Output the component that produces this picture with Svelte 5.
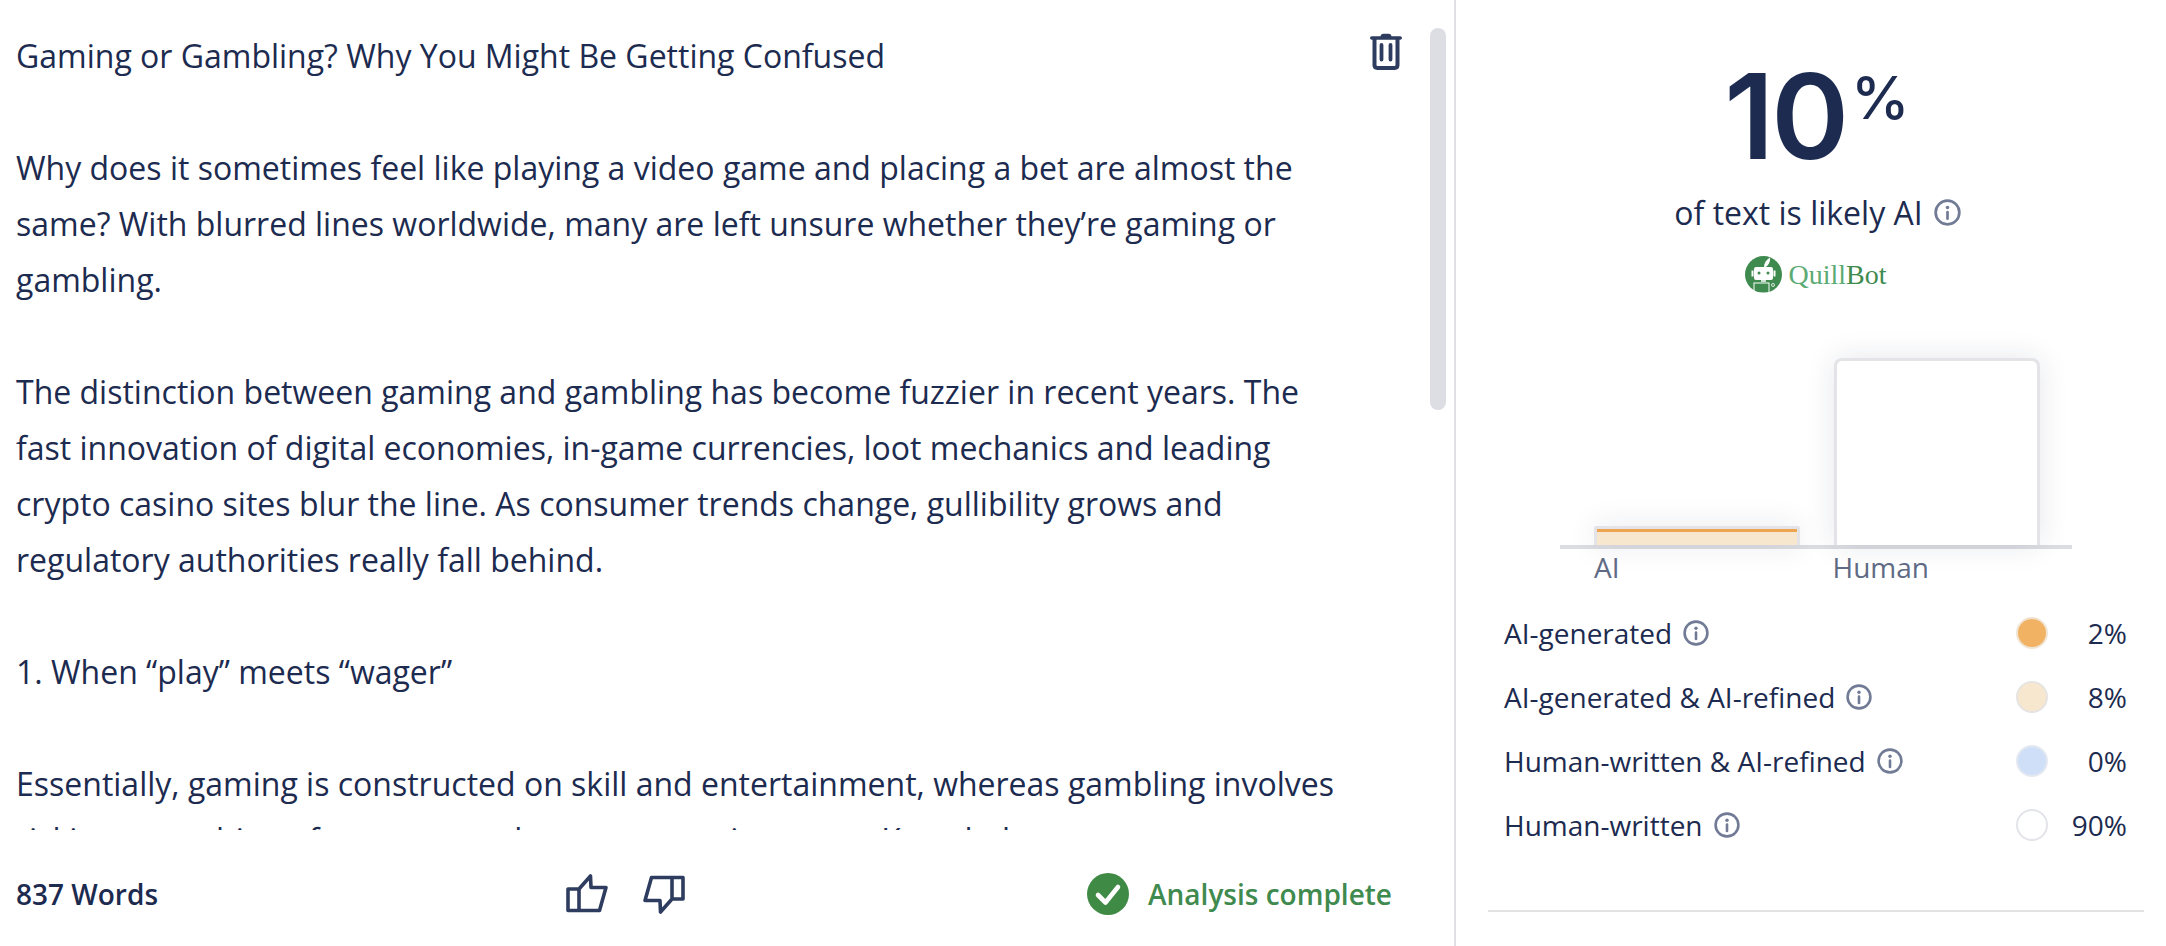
<script lang="ts">
	const paragraphs = [
		'Gaming or Gambling? Why You Might Be Getting Confused',
		'Why does it sometimes feel like playing a video game and placing a bet are almost the same? With blurred lines worldwide, many are left unsure whether they’re gaming or gambling.',
		'The distinction between gaming and gambling has become fuzzier in recent years. The fast innovation of digital economies, in-game currencies, loot mechanics and leading crypto casino sites blur the line. As consumer trends change, gullibility grows and regulatory authorities really fall behind.',
		'1. When “play” meets “wager”',
		'Essentially, gaming is constructed on skill and entertainment, whereas gambling involves risking something of monetary value on uncertain events. Knowledge'
	];

	const legend = [
		{ label: 'AI-generated', value: '2%', color: '#f2b264', ring: '#f0e4d4' },
		{ label: 'AI-generated & AI-refined', value: '8%', color: '#f8e7cf', ring: '#e6e4e2' },
		{ label: 'Human-written & AI-refined', value: '0%', color: '#cfdff8', ring: '#e4e8f0' },
		{ label: 'Human-written', value: '90%', color: '#ffffff', ring: '#e2e4ea' }
	];
</script>

{#snippet info(size: number)}
	<svg class="info" width={size} height={size} viewBox="0 0 26 26" aria-hidden="true">
		<circle cx="13" cy="13" r="11.4" fill="none" stroke="#717b95" stroke-width="2.6" />
		<circle cx="13" cy="8.2" r="1.7" fill="#717b95" />
		<path d="M13 12.500v6.500" stroke="#717b95" stroke-width="2.6" stroke-linecap="round" />
	</svg>
{/snippet}

<div class="page">
	<section class="editor">
		<div class="scroll">
			{#each paragraphs as text}
				<p>{text}</p>
			{/each}
		</div>

		<svg class="trash" width="32" height="37" viewBox="0 0 32 37" aria-label="Delete">
			<path d="M10.500 4c0-2.200 1.200-3.200 3-3.200h5c1.800 0 3 1 3 3.200z" fill="#2e3d5f" />
			<path d="M1.800 5h28.400" stroke="#2e3d5f" stroke-width="3.600" stroke-linecap="round" />
			<path d="M4.500 5v27c0 1.900 1 2.900 2.900 2.900h17.200c1.900 0 2.900-1 2.900-2.900V5" fill="none" stroke="#2e3d5f" stroke-width="4" />
			<path d="M11.500 12v14.500M20.500 12v14.500" stroke="#2e3d5f" stroke-width="3.800" stroke-linecap="round" />
		</svg>
		<div class="scrollbar"></div>

		<footer>
			<span class="count">837 Words</span>
			<div class="votes">
				<svg width="42" height="40" viewBox="0 0 42 40" aria-label="Thumbs up">
					<path d="M13 15H2v21.500h11M13 15 24.500 2l.5 11.500h15l-6.500 23H13z" fill="none" stroke="#2e3d5f" stroke-width="3.600" stroke-linejoin="round" />
				</svg>
				<svg width="42" height="40" viewBox="0 0 42 40" aria-label="Thumbs down">
					<path d="M29 25h11V3.500H29M29 25 17.500 38l-.5-11.500H2L8.500 3.500H29z" fill="none" stroke="#2e3d5f" stroke-width="3.600" stroke-linejoin="round" />
				</svg>
			</div>
			<div class="status">
				<svg width="42" height="42" viewBox="0 0 42 42" aria-hidden="true">
					<circle cx="21" cy="21" r="21" fill="#3f8a44" />
					<path d="M11 22l7.500 7.500L31 14" fill="none" stroke="#fff" stroke-width="4.600" stroke-linecap="round" stroke-linejoin="round" />
				</svg>
				<span>Analysis complete</span>
			</div>
		</footer>
	</section>

	<aside class="report">
		<div class="score"><span class="num">10</span><span class="pct">%</span></div>
		<div class="caption">of text is likely AI{@render info(27)}</div>
		<div class="brand">
			<svg width="37" height="37" viewBox="0 0 37 37" aria-hidden="true">
				<circle cx="18.500" cy="18.500" r="18.500" fill="#3f8a4e" />
				<path d="M19 11c0-4 2-7 6-9.500 0.500 3.500-1 7.500-4.500 9.500z" fill="#fff" />
				<rect x="9" y="11" width="19" height="13" rx="2" fill="#fff" />
				<rect x="6.500" y="14.500" width="2" height="6" fill="#fff" />
				<rect x="28.500" y="14.500" width="2" height="6" fill="#fff" />
				<circle cx="14" cy="17" r="1.500" fill="#3f8a4e" />
				<circle cx="23" cy="17" r="1.500" fill="#3f8a4e" />
				<rect x="16" y="24" width="5" height="2" fill="#cfe3d4" />
				<rect x="9" y="27" width="15" height="10" fill="none" stroke="#fff" stroke-width="1" />
				<circle cx="28" cy="29" r="1.500" fill="none" stroke="#fff" stroke-width="0.800" />
			</svg>
			<span class="wordmark"><span class="quill">Quill</span><span class="bot">Bot</span></span>
		</div>

		<div class="chart">
			<div class="bars">
				<div class="bar ai"><div class="strip"></div></div>
				<div class="bar human"></div>
			</div>
			<div class="axis">
				<span>AI</span>
				<span>Human</span>
			</div>
		</div>

		<ul class="legend">
			{#each legend as row}
				<li>
					<span class="label">{row.label}{@render info(26)}</span>
					<span class="dot" style="background: {row.color}; border-color: {row.ring}"></span>
					<span class="value">{row.value}</span>
				</li>
			{/each}
		</ul>

		<div class="rule"></div>
	</aside>
</div>

<style>
	:global(body) {
		margin: 0;
		background: #fff;
		color: #1c2b4f;
		font-family: 'Open Sans', 'Liberation Sans', sans-serif;
	}

	.page {
		display: flex;
		width: 2166px;
		height: 946px;
		overflow: hidden;
	}

	.editor {
		position: relative;
		display: flex;
		flex-direction: column;
		width: 1454px;
		flex: none;
		border-right: 2px solid #dfe0e4;
	}

	.scroll {
		height: 802px;
		padding: 28px 100px 0 16px;
		overflow: hidden;
		font-size: 32px;
		line-height: 56px;
	}

	.scroll p {
		margin: 0 0 56px;
	}

	.trash {
		position: absolute;
		top: 33px;
		left: 1370px;
	}

	.scrollbar {
		position: absolute;
		top: 28px;
		left: 1430px;
		width: 16px;
		height: 382px;
		border-radius: 8px;
		background: #dcdee3;
	}

	footer {
		flex: 1;
		display: grid;
		grid-template-columns: 550px 130px 1fr;
		align-items: center;
		padding: 12px 62px 0 16px;
		font-size: 28px;
		font-weight: 600;
	}

	.votes {
		display: flex;
		gap: 35px;
	}

	.status {
		justify-self: end;
		display: flex;
		align-items: center;
		gap: 19px;
		color: #3f8a4e;
	}

	.report {
		flex: 1;
		display: flex;
		flex-direction: column;
		align-items: center;
		padding: 0 22px 0 32px;
	}

	.score {
		box-sizing: border-box;
		display: flex;
		align-items: flex-start;
		height: 186px;
		margin-left: 2px;
		padding-top: 46px;
		font-family: Inter, 'Liberation Sans', sans-serif;
		font-weight: 600;
		color: #1c2b4f;
	}

	.num {
		font-size: 118px;
		line-height: 140px;
		letter-spacing: -3px;
	}

	.pct {
		margin: 14px 0 0 5px;
		font-size: 59px;
		line-height: 76px;
		font-weight: 500;
	}

	.caption {
		display: flex;
		align-items: center;
		gap: 11px;
		height: 52px;
		margin-left: 3px;
		font-size: 32px;
		white-space: pre;
	}

	.brand {
		display: flex;
		align-items: center;
		gap: 6px;
		margin-top: 18px;
	}

	.wordmark {
		font-family: 'Liberation Serif', serif;
		font-size: 28px;
	}

	.quill {
		color: #5cab74;
	}

	.bot {
		color: #3f8a4e;
	}

	.chart {
		width: 512px;
		margin-top: 65px;
		align-self: flex-start;
		margin-left: 72px;
	}

	.bars {
		display: flex;
		align-items: flex-end;
		gap: 34px;
		height: 187px;
		padding-left: 34px;
		border-bottom: 4px solid #dcdde2;
	}

	.bar {
		box-sizing: border-box;
		width: 206px;
		border: 3px solid #e3e3e8;
		border-bottom: 0;
		border-radius: 8px 8px 0 0;
		box-shadow: 0 0 30px rgba(30, 40, 70, 0.11);
	}

	.bar.ai {
		height: 19px;
		background: #f8e7cf;
		border-radius: 3px 3px 0 0;
	}

	.strip {
		height: 3px;
		background: #eea552;
	}

	.bar.human {
		height: 187px;
		background: #fff;
	}

	.axis {
		display: flex;
		gap: 213px;
		padding-left: 34px;
		font-size: 28px;
		line-height: 36px;
		color: #5f6b85;
	}

	.legend {
		align-self: stretch;
		margin: 16px 0 0;
		padding: 0 17px 0 16px;
		list-style: none;
		font-size: 28px;
	}

	.legend li {
		display: flex;
		align-items: center;
		height: 64px;
	}

	.label {
		flex: 1;
		display: flex;
		align-items: center;
		gap: 11px;
		white-space: pre;
	}

	.dot {
		box-sizing: border-box;
		width: 32px;
		height: 32px;
		border: 2px solid;
		border-radius: 50%;
	}

	.value {
		width: 79px;
		text-align: right;
	}

	.rule {
		align-self: stretch;
		height: 2px;
		margin-top: 53px;
		background: #e2e2e2;
	}
</style>
